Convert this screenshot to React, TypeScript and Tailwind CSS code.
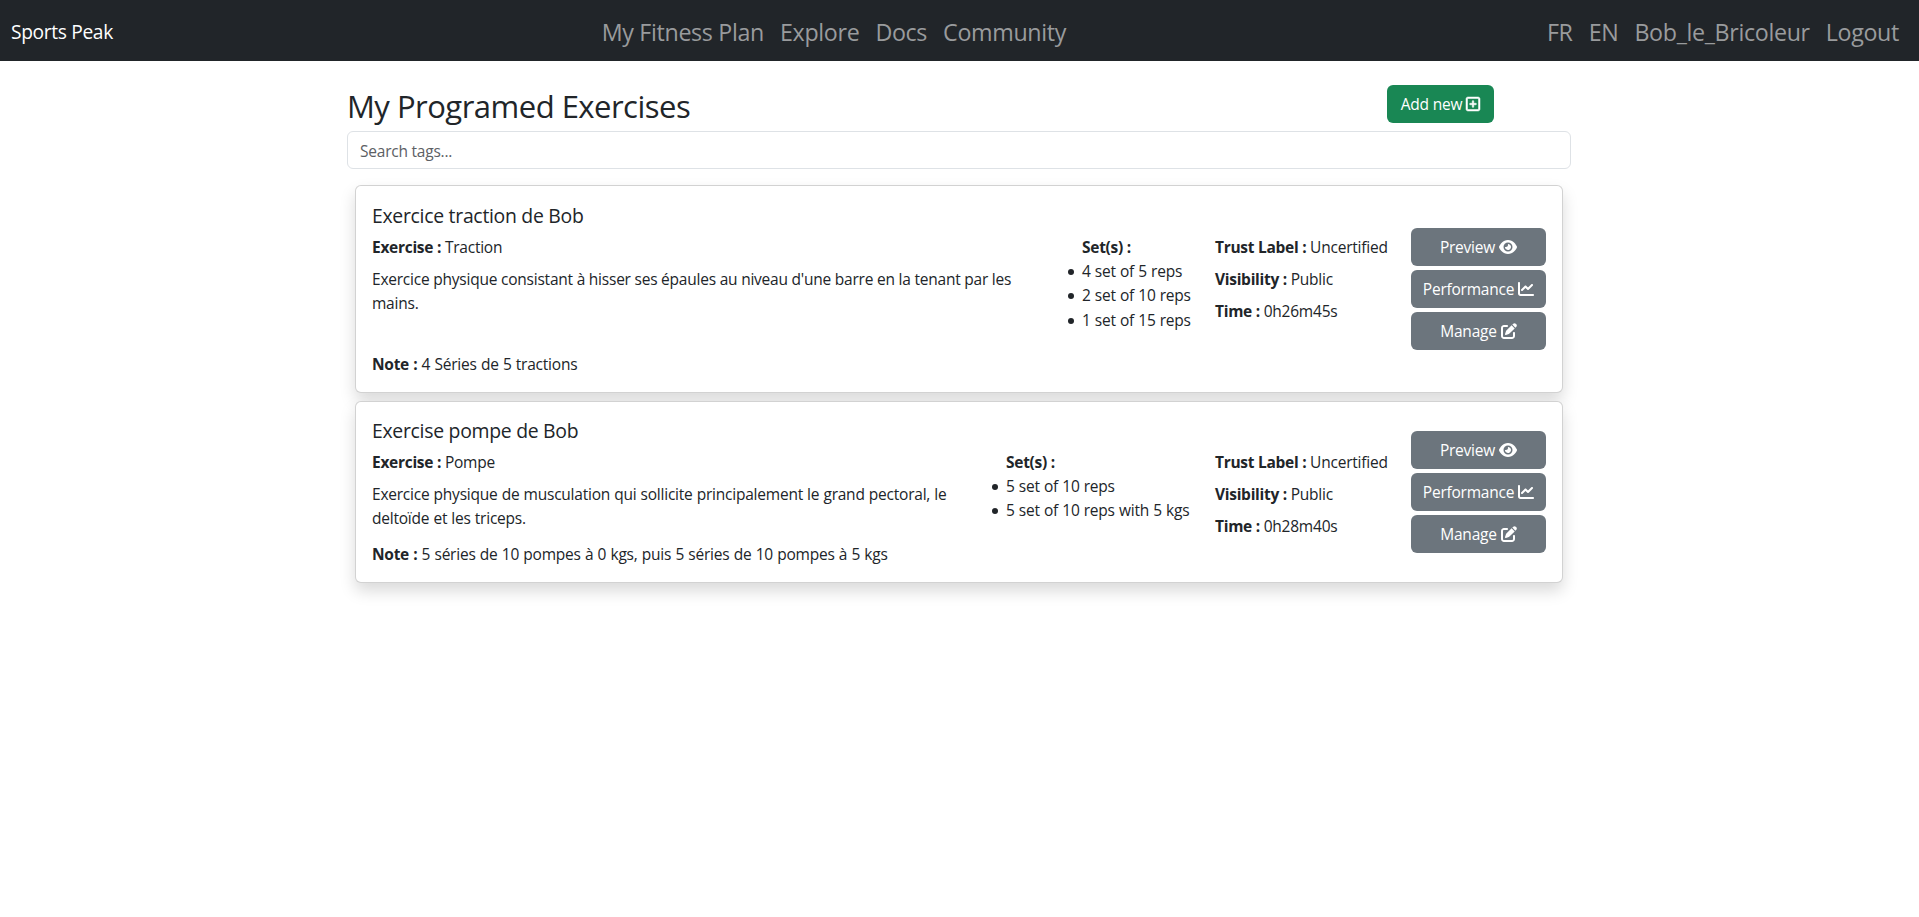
import type { ReactNode } from "react";
import { FaChartLine, FaEye, FaPenToSquare, FaRegSquarePlus } from "react-icons/fa6";

interface Exercise {
  title: string;
  exercise: string;
  description: string;
  note: string;
  sets: string[];
  trust: string;
  visibility: string;
  time: string;
  cardClass: string;
  textClass: string;
  descriptionClass: string;
  setsClass: string;
}

const exercises: Exercise[] = [
  {
    title: "Exercice traction de Bob",
    exercise: "Traction",
    description:
      "Exercice physique consistant à hisser ses épaules au niveau d'une barre en la tenant par les mains.",
    note: "4 Séries de 5 tractions",
    sets: ["4 set of 5 reps", "2 set of 10 reps", "1 set of 15 reps"],
    trust: "Uncertified",
    visibility: "Public",
    time: "0h26m45s",
    cardClass: "h-[208px]",
    textClass: "pt-px",
    descriptionClass: "[word-spacing:0px]",
    setsClass: "w-[141px]",
  },
  {
    title: "Exercise pompe de Bob",
    exercise: "Pompe",
    description:
      "Exercice physique de musculation qui sollicite principalement le grand pectoral, le deltoïde et les triceps.",
    note: "5 séries de 10 pompes à 0 kgs, puis 5 séries de 10 pompes à 5 kgs",
    sets: ["5 set of 10 reps", "5 set of 10 reps with 5 kgs"],
    trust: "Uncertified",
    visibility: "Public",
    time: "0h28m40s",
    cardClass: "h-[182px]",
    textClass: "pt-0",
    descriptionClass: "[word-spacing:0.35px]",
    setsClass: "w-[217px]",
  },
];

function Label({ children }: { children: ReactNode }) {
  return <strong className="font-bold tracking-[-0.018em]">{children}</strong>;
}

function NavLink({ children }: { children: ReactNode }) {
  return (
    <a href="#" className="px-2 text-[23.25px] leading-9 tracking-[-0.0145em] text-[#999b9d]">
      {children}
    </a>
  );
}

function ActionButton({ label, icon }: { label: string; icon: ReactNode }) {
  return (
    <button className="flex h-[38px] w-[135px] items-center justify-center gap-1 rounded-md bg-[#6c757d] text-white">
      <span>{label}</span>
      {icon}
    </button>
  );
}

function ExerciseCard({ item }: { item: Exercise }) {
  return (
    <article
      className={`flex rounded-md border border-black/[0.175] bg-white p-4 shadow-[0_8px_16px_rgba(0,0,0,0.15)] ${item.cardClass}`}
    >
      <div className={`flex min-w-0 flex-1 flex-col ${item.textClass}`}>
        <h5 className="mb-[7px] pt-px text-[19.4px] leading-6 tracking-[-0.0145em]">{item.title}</h5>
        <p className="mb-2">
          <Label>Exercise :</Label> {item.exercise}
        </p>
        <p className={`pr-5 ${item.descriptionClass}`}>{item.description}</p>
        <p className="mt-auto [word-spacing:0.45px]">
          <Label>Note :</Label> {item.note}
        </p>
      </div>
      <div className={`mt-8 shrink-0 pl-8 ${item.setsClass} ${item.textClass}`}>
        <Label>Set(s) :</Label>
        <ul className="[word-spacing:0.4px]">
          {item.sets.map((set) => (
            <li
              key={set}
              className="-ml-3.5 flex items-center gap-2 whitespace-nowrap leading-[24.3px] before:mt-0.5 before:size-1.5 before:rounded-full before:bg-[#212529]"
            >
              {set}
            </li>
          ))}
        </ul>
      </div>
      <div
        className={`ml-6 mt-8 flex w-[172px] shrink-0 flex-col gap-2 whitespace-nowrap ${item.textClass}`}
      >
        <p>
          <Label>Trust Label :</Label> {item.trust}
        </p>
        <p>
          <Label>Visibility :</Label> {item.visibility}
        </p>
        <p>
          <Label>Time :</Label> {item.time}
        </p>
      </div>
      <div className="ml-6 flex shrink-0 flex-col justify-center gap-1">
        <ActionButton label="Preview" icon={<FaEye className="h-4 w-[18px]" />} />
        <ActionButton label="Performance" icon={<FaChartLine className="size-4" />} />
        <ActionButton label="Manage" icon={<FaPenToSquare className="size-4" />} />
      </div>
    </article>
  );
}

export default function App() {
  return (
    <div className="min-h-screen bg-white font-['Open_Sans','Noto_Sans',sans-serif] text-[15.5px] leading-6 tracking-[-0.0145em] text-[#212529]">
      <nav className="flex h-[61px] items-center justify-between bg-[#212529] pl-[11px] pr-3 pt-0.5">
        <a href="#" className="mr-4 text-[19.2px] leading-8 tracking-[-0.018em] text-white">
          Sports Peak
        </a>
        <div className="flex">
          <NavLink>My Fitness Plan</NavLink>
          <NavLink>Explore</NavLink>
          <NavLink>Docs</NavLink>
          <NavLink>Community</NavLink>
        </div>
        <div className="flex">
          <NavLink>FR</NavLink>
          <NavLink>EN</NavLink>
          <NavLink>Bob_le_Bricoleur</NavLink>
          <NavLink>Logout</NavLink>
        </div>
      </nav>

      <main className="mx-auto w-[1225px] pr-px pt-6">
        <header className="flex h-[46px] items-start justify-between pr-[77px]">
          <h2 className="pt-0.5 text-[31px] leading-[38px] tracking-[-0.0165em]">
            My Programed Exercises
          </h2>
          <button className="flex h-[38px] w-[107px] items-center justify-center gap-1 rounded-md bg-[#198754] text-white">
            <span>Add new</span>
            <FaRegSquarePlus className="h-4 w-3.5 overflow-visible" strokeWidth={16} />
          </button>
        </header>
        <input
          type="text"
          placeholder="Search tags..."
          className="block h-[38px] w-full rounded-md border border-[#dee2e6] bg-white px-3 pt-0.5 placeholder:text-[#5c6064]"
        />
        <section className="flex flex-col gap-2 px-2 pt-4">
          {exercises.map((item) => (
            <ExerciseCard key={item.title} item={item} />
          ))}
        </section>
      </main>
    </div>
  );
}
